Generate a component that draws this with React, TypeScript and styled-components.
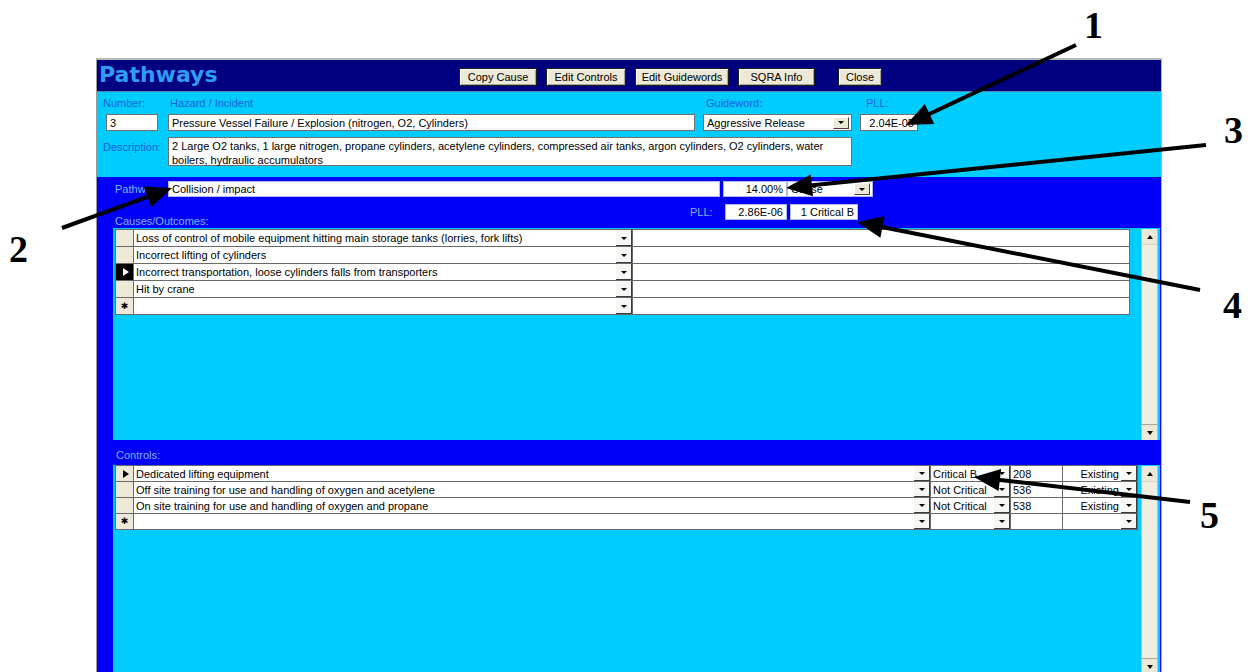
import React from 'react';
import styled, { createGlobalStyle, css } from 'styled-components';

const CYAN = '#00ccff';
const BLUE = '#0000f8';
const NAVY = '#000080';
const FACE = '#ece9d8';
const LINE = '#6a6a6a';

type Mark = 'none' | 'current' | 'pointer' | 'new';

type CauseRow = { text: string; mark: Mark };
type ControlRow = { text: string; criticality: string; ref: string; status: string; mark: Mark };

const causes: CauseRow[] = [
  { text: 'Loss of control of mobile equipment hitting main storage tanks (lorries, fork lifts)', mark: 'none' },
  { text: 'Incorrect lifting of cylinders', mark: 'none' },
  { text: 'Incorrect transportation, loose cylinders falls from transporters', mark: 'current' },
  { text: 'Hit by crane', mark: 'none' },
  { text: '', mark: 'new' },
];

const controls: ControlRow[] = [
  { text: 'Dedicated lifting equipment', criticality: 'Critical B', ref: '208', status: 'Existing', mark: 'pointer' },
  { text: 'Off site training for use and handling of oxygen and acetylene', criticality: 'Not Critical', ref: '536', status: 'Existing', mark: 'none' },
  { text: 'On site training for use and handling of oxygen and propane', criticality: 'Not Critical', ref: '538', status: 'Existing', mark: 'none' },
  { text: '', criticality: '', ref: '', status: '', mark: 'new' },
];

const toolButtons = [
  { label: 'Copy Cause', width: 78, gap: 0 },
  { label: 'Edit Controls', width: 80, gap: 9 },
  { label: 'Edit Guidewords', width: 94, gap: 9 },
  { label: 'SQRA Info', width: 77, gap: 9 },
  { label: 'Close', width: 44, gap: 23 },
];

// numbered call-outs drawn over the form
const callouts = [
  { n: '1', x: 1084, y: 6, from: [1076, 45], to: [906, 125] },
  { n: '2', x: 9, y: 230, from: [62, 228], to: [172, 188] },
  { n: '3', x: 1224, y: 111, from: [1206, 145], to: [786, 188] },
  { n: '4', x: 1223, y: 286, from: [1200, 290], to: [857, 222] },
  { n: '5', x: 1200, y: 496, from: [1190, 502], to: [974, 477] },
];

const GlobalStyle = createGlobalStyle`
  html, body {
    margin: 0;
    padding: 0;
    background: #ffffff;
  }
  body {
    font-family: "Liberation Sans", Arial, sans-serif;
    font-size: 11px;
    color: #000;
  }
  *, *::before, *::after {
    box-sizing: border-box;
  }
`;

const Stage = styled.div`
  position: relative;
  width: 1250px;
  height: 672px;
  overflow: hidden;
  padding: 58px 0 0 96px;
  background: #fff;
`;

const Window = styled.div`
  width: 1066px;
  height: 616px;
  display: flex;
  flex-direction: column;
  border-left: 1px solid #9a9a9a;
  border-right: 1px solid #b4b4b4;
  border-top: 2px solid #b8b8b8;
  background: ${BLUE};
`;

const TitleBar = styled.header`
  height: 32px;
  display: flex;
  align-items: flex-start;
  background: ${NAVY};
  border-bottom: 1px solid #4c86a8;
`;

const Title = styled.h1`
  width: 362px;
  margin: 0;
  padding-left: 2px;
  font-family: "DejaVu Sans", Verdana, sans-serif;
  font-weight: bold;
  font-size: 22px;
  line-height: 30px;
  color: #2f9cf7;
`;

const ToolButtons = styled.div`
  display: flex;
  margin-top: 8px;
`;

const ToolButton = styled.button<{ $w: number; $gap: number }>`
  width: ${p => p.$w}px;
  height: 18px;
  margin-left: ${p => p.$gap}px;
  padding: 0;
  background: ${FACE};
  border: 1px solid #1c1c1c;
  box-shadow: inset 1px 1px 0 #ffffff, inset -1px -1px 0 #a7a493;
  font-family: "Liberation Sans", Arial, sans-serif;
  font-size: 11px;
  line-height: 15px;
  color: #000;
`;

const HeaderForm = styled.section`
  height: 85px;
  flex: none;
  display: grid;
  grid-template-columns: 57px 527px 149px 58px;
  grid-template-rows: 14px 17px 31px;
  column-gap: 8px;
  row-gap: 4px;
  padding: 4px 0 0 6px;
  background: ${CYAN};
`;

const FormLabel = styled.label<{ $pl?: number; $mt?: number }>`
  padding-left: ${p => p.$pl ?? 0}px;
  margin-top: ${p => p.$mt ?? 0}px;
  font-size: 11px;
  line-height: 14px;
  color: #1a5fd9;
  white-space: nowrap;
`;

const Field = styled.div<{ $w?: number; $ml?: number; $align?: 'left' | 'right'; $tone?: 'form' | 'bar' }>`
  ${p =>
    p.$w !== undefined &&
    css`
      width: ${p.$w}px;
      flex: none;
    `}
  margin-left: ${p => p.$ml ?? 0}px;
  height: ${p => (p.$tone === 'bar' ? 16 : 17)}px;
  padding: 0 3px;
  display: flex;
  align-items: center;
  justify-content: ${p => (p.$align === 'right' ? 'flex-end' : 'flex-start')};
  background: #fff;
  border: 1px solid ${p => (p.$tone === 'bar' ? '#b4b4ee' : '#707070')};
  font-size: 11px;
  line-height: 14px;
  white-space: nowrap;
  overflow: hidden;
`;

const ComboField = styled(Field)`
  padding-right: 2px;
`;

const FieldText = styled.span<{ $align?: 'left' | 'right' }>`
  flex: 1;
  overflow: hidden;
  text-align: ${p => p.$align ?? 'left'};
`;

const DescBox = styled.div`
  grid-column: span 2;
  margin-top: 2px;
  padding: 1px 3px;
  background: #fff;
  border: 1px solid #707070;
  font-size: 11px;
  line-height: 14px;
`;

const DropButton = styled.span<{ $raised?: boolean }>`
  width: 16px;
  height: 12px;
  flex: none;
  display: flex;
  align-items: center;
  justify-content: center;
  background: ${p => (p.$raised ? FACE : '#f6f6f2')};
  ${p =>
    p.$raised
      ? css`
          border: 1px solid;
          border-color: #ffffff #404040 #404040 #ffffff;
        `
      : css`
          box-shadow: inset -1px -1px 0 #3a3a3a;
        `}
  &::after {
    content: '';
    border-left: 3px solid transparent;
    border-right: 3px solid transparent;
    border-top: 3px solid #000;
  }
`;

const Subform = styled.section`
  flex: 1;
  min-height: 0;
  display: flex;
  flex-direction: column;
  padding: 0 1px 0 16px;
  background: ${BLUE};
`;

const BarRow = styled.div<{ $mt: number; $h: number }>`
  display: flex;
  align-items: flex-start;
  margin-top: ${p => p.$mt}px;
  height: ${p => p.$h}px;
  flex: none;
`;

const BarLabel = styled.span<{ $w: number; $bottom?: boolean }>`
  width: ${p => p.$w}px;
  flex: none;
  align-self: ${p => (p.$bottom ? 'flex-end' : 'flex-start')};
  padding-left: 2px;
  font-size: 11px;
  line-height: ${p => (p.$bottom ? 14 : 16)}px;
  color: #82b4ff;
  white-space: nowrap;
`;

const PllLabel = styled(BarLabel)`
  padding-left: 0;
`;

const Pane = styled.div<{ $h?: number }>`
  ${p =>
    p.$h
      ? css`
          height: ${p.$h}px;
          flex: none;
        `
      : css`
          flex: 1;
          min-height: 0;
        `}
  display: flex;
  padding: 0 2px;
  background: ${CYAN};
`;

const GridRows = styled.div<{ $w: number; $mt: number }>`
  width: ${p => p.$w}px;
  flex: none;
  align-self: flex-start;
  margin-top: ${p => p.$mt}px;
  border-top: 1px solid ${LINE};
  border-left: 1px solid ${LINE};
`;

const GridRow = styled.div<{ $cols: string; $h: number }>`
  display: grid;
  grid-template-columns: ${p => p.$cols};
  height: ${p => p.$h}px;
  background: #fff;
  border-bottom: 1px solid ${LINE};
`;

const RowSelector = styled.div<{ $mark: Mark }>`
  display: flex;
  align-items: center;
  justify-content: center;
  background: ${p => (p.$mark === 'current' ? '#000' : FACE)};
  border-right: 1px solid ${LINE};
  font-family: "DejaVu Sans", sans-serif;
  font-size: 9px;
  line-height: 1;
  ${p =>
    (p.$mark === 'current' || p.$mark === 'pointer') &&
    css`
      &::before {
        content: '';
        margin-left: 2px;
        border-top: 4px solid transparent;
        border-bottom: 4px solid transparent;
        border-left: 6px solid ${p.$mark === 'current' ? '#fff' : '#000'};
      }
    `}
  ${p =>
    p.$mark === 'new' &&
    css`
      &::before {
        content: '✱';
      }
    `}
`;

const Cell = styled.div<{ $open?: boolean }>`
  display: flex;
  align-items: center;
  min-width: 0;
  padding: 0 2px;
  border-right: ${p => (p.$open ? 'none' : `1px solid ${LINE}`)};
  font-size: 11px;
  line-height: 14px;
  white-space: nowrap;
  overflow: hidden;
`;

const ComboCell = styled(Cell)<{ $bare?: boolean }>`
  padding: ${p => (p.$bare ? '0' : '0 0 0 2px')};
  gap: 2px;
  ${DropButton} {
    align-self: stretch;
    height: auto;
  }
`;

const ScrollBar = styled.div<{ $ml: number }>`
  width: 17px;
  flex: none;
  margin-left: ${p => p.$ml}px;
  margin-top: 1px;
  display: flex;
  flex-direction: column;
  justify-content: space-between;
  background: #f0eee2;
  border-left: 1px solid #c2bfb2;
  border-right: 1px solid #c2bfb2;
`;

const ScrollArrow = styled.div<{ $dir: 'up' | 'down' }>`
  height: 16px;
  display: flex;
  align-items: center;
  justify-content: center;
  background: ${FACE};
  border-bottom: ${p => (p.$dir === 'up' ? '1px solid #d8d5c6' : 'none')};
  border-top: ${p => (p.$dir === 'down' ? '1px solid #a9a693' : 'none')};
  &::after {
    content: '';
    border-left: 3px solid transparent;
    border-right: 3px solid transparent;
    ${p => (p.$dir === 'up' ? 'border-bottom: 4px solid #000;' : 'border-top: 4px solid #000;')}
  }
`;

const Band = styled.div`
  height: 25px;
  flex: none;
  display: flex;
  align-items: flex-end;
  padding: 0 0 3px 3px;
  font-size: 11px;
  line-height: 14px;
  color: #82b4ff;
`;

const Overlay = styled.svg`
  position: absolute;
  left: 0;
  top: 0;
  width: 1250px;
  height: 672px;
  pointer-events: none;
`;

const Callout = styled.span<{ $x: number; $y: number }>`
  position: absolute;
  left: ${p => p.$x}px;
  top: ${p => p.$y}px;
  font-family: "Liberation Serif", "Times New Roman", serif;
  font-weight: bold;
  font-size: 38px;
  line-height: 1;
  color: #000;
`;

const CAUSE_COLS = '18px 482px 17px 1fr';
const CONTROL_COLS = '18px 797px 80px 52px 1fr';

function Scroller({ ml }: { ml: number }) {
  return (
    <ScrollBar $ml={ml}>
      <ScrollArrow $dir="up" />
      <ScrollArrow $dir="down" />
    </ScrollBar>
  );
}

function Arrow({ from, to }: { from: number[]; to: number[] }) {
  const [x1, y1] = from;
  const [x2, y2] = to;
  const len = Math.hypot(x2 - x1, y2 - y1);
  const ux = (x2 - x1) / len;
  const uy = (y2 - y1) / len;
  const head = 26;
  const half = 11;
  const bx = x2 - ux * head;
  const by = y2 - uy * head;
  const pts = [
    [x2, y2],
    [bx - uy * half, by + ux * half],
    [bx + uy * half, by - ux * half],
  ]
    .map(p => p.join(','))
    .join(' ');
  return (
    <g>
      <line x1={x1} y1={y1} x2={bx + ux * 2} y2={by + uy * 2} stroke="#000" strokeWidth={4} />
      <polygon points={pts} fill="#000" />
    </g>
  );
}

export default function App() {
  return (
    <>
      <GlobalStyle />
      <Stage>
        <Window>
          <TitleBar>
            <Title>Pathways</Title>
            <ToolButtons>
              {toolButtons.map(b => (
                <ToolButton key={b.label} $w={b.width} $gap={b.gap}>
                  {b.label}
                </ToolButton>
              ))}
            </ToolButtons>
          </TitleBar>

          <HeaderForm>
            <FormLabel>Number:</FormLabel>
            <FormLabel $pl={2}>Hazard / Incident</FormLabel>
            <FormLabel $pl={3}>Guideword:</FormLabel>
            <FormLabel $pl={6}>PLL:</FormLabel>

            <Field $w={52} $ml={3}>3</Field>
            <Field>Pressure Vessel Failure / Explosion (nitrogen, O2, Cylinders)</Field>
            <ComboField>
              <FieldText>Aggressive Release</FieldText>
              <DropButton $raised />
            </ComboField>
            <Field $align="right">2.04E-05</Field>

            <FormLabel $mt={5}>Description:</FormLabel>
            <DescBox>
              2 Large O2 tanks, 1 large nitrogen, propane cylinders, acetylene cylinders, compressed air tanks, argon
              cylinders, O2 cylinders, water boilers, hydraulic accumulators
            </DescBox>
          </HeaderForm>

          <Subform>
            <BarRow $mt={4} $h={16}>
              <BarLabel $w={55}>Pathway:</BarLabel>
              <Field $tone="bar" $w={552}>
                Collision / impact
              </Field>
              <Field $tone="bar" $w={64} $ml={3} $align="right">
                14.00%
              </Field>
              <ComboField $tone="bar" $w={86}>
                <FieldText>Cause</FieldText>
                <DropButton $raised />
              </ComboField>
            </BarRow>
            <BarRow $mt={7} $h={24}>
              <BarLabel $w={577} $bottom>
                Causes/Outcomes:
              </BarLabel>
              <PllLabel $w={22}>PLL:</PllLabel>
              <Field $tone="bar" $w={62} $ml={13} $align="right">
                2.86E-06
              </Field>
              <Field $tone="bar" $w={68} $ml={3} $align="right">
                1 Critical B
              </Field>
            </BarRow>

            <Pane $h={212}>
              <GridRows $w={1015} $mt={1}>
                {causes.map((c, i) => (
                  <GridRow key={i} $cols={CAUSE_COLS} $h={17}>
                    <RowSelector $mark={c.mark} />
                    <Cell $open>{c.text}</Cell>
                    <ComboCell $bare>
                      <DropButton />
                    </ComboCell>
                    <Cell />
                  </GridRow>
                ))}
              </GridRows>
              <Scroller ml={11} />
            </Pane>

            <Band>Controls:</Band>

            <Pane>
              <GridRows $w={1023} $mt={0}>
                {controls.map((c, i) => (
                  <GridRow key={i} $cols={CONTROL_COLS} $h={16}>
                    <RowSelector $mark={c.mark} />
                    <ComboCell>
                      <FieldText>{c.text}</FieldText>
                      <DropButton />
                    </ComboCell>
                    <ComboCell>
                      <FieldText>{c.criticality}</FieldText>
                      <DropButton />
                    </ComboCell>
                    <Cell>{c.ref}</Cell>
                    <ComboCell>
                      <FieldText $align="right">{c.status}</FieldText>
                      <DropButton />
                    </ComboCell>
                  </GridRow>
                ))}
              </GridRows>
              <Scroller ml={3} />
            </Pane>
          </Subform>
        </Window>

        <Overlay viewBox="0 0 1250 672">
          {callouts.map(c => (
            <Arrow key={c.n} from={c.from} to={c.to} />
          ))}
        </Overlay>
        {callouts.map(c => (
          <Callout key={c.n} $x={c.x} $y={c.y}>
            {c.n}
          </Callout>
        ))}
      </Stage>
    </>
  );
}
